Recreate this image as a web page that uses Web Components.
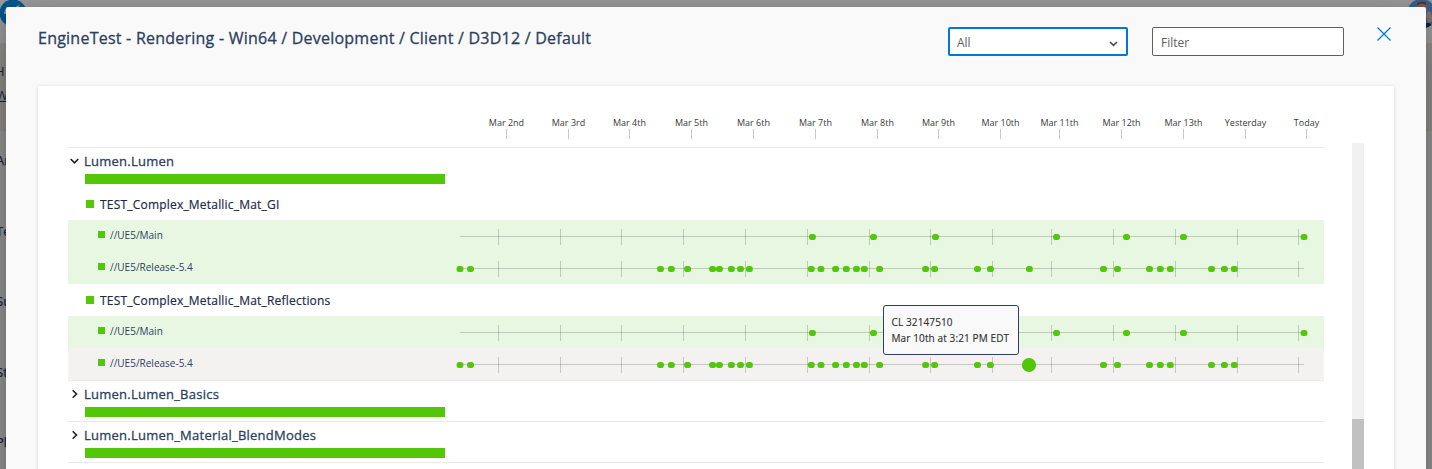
<!DOCTYPE html>
<html lang="en">
<head>
<meta charset="utf-8">
<title>Test automation</title>
<style>
html, body { margin: 0; height: 100%; overflow: hidden; background: #fff; font-family: "Open Sans", sans-serif; }
</style>
</head>
<body>
<automation-app></automation-app>
<script>
const define = (name, html, setup) => {
  const tpl = document.createElement('template');
  tpl.innerHTML = html;
  customElements.define(name, class extends HTMLElement {
    connectedCallback() {
      if (this.shadowRoot) return;
      this.attachShadow({ mode: 'open' }).append(tpl.content.cloneNode(true));
      if (setup) setup(this, this.shadowRoot);
    }
  });
};

/* Timeline data: x positions run from the left end of the track */
const DAYS = [
  ['Mar 2nd', 38], ['Mar 3rd', 100], ['Mar 4th', 161], ['Mar 5th', 223], ['Mar 6th', 285],
  ['Mar 7th', 347], ['Mar 8th', 409], ['Mar 9th', 470], ['Mar 10th', 532], ['Mar 11th', 591],
  ['Mar 12th', 653], ['Mar 13th', 715], ['Yesterday', 777], ['Today', 838]
];
const RUNS = {
  main: [352.4, 413.5, 475.5, 596.5, 666.5, 723.5, 844],
  release: [0, 10.5, 200.5, 211.3, 227.6, 252.6, 259.4, 271.4, 280.5, 289.4, 351.3, 361, 375.6, 386.3,
    396.5, 404.3, 419.6, 465.6, 474.6, 517.5, 530.4, 569.4, 643.5, 657.5, 689.5, 700.3, 710.3, 751.5, 764.4, 774.3]
};

/* Page behind the dialog */
define('app-backdrop', `
<style>
  :host { display: grid; grid-template-rows: 43px 88px 1fr; height: 469px; overflow: hidden; color: #2d3f5f; font-size: 13px; line-height: 18px; }
  header { display: flex; justify-content: space-between; background: #fff; }
  .logo { width: 30px; height: 30px; margin-left: -1px; }
  .avatar { width: 30px; height: 30px; margin-right: -2px; }
  .crumbs { background: #edebe9; padding-top: 19px; }
  .crumbs div { height: 24px; margin-left: -5px; }
  .crumbs .link { text-decoration: underline; margin-left: -4px; }
  nav { background: #faf9f8; padding-top: 20px; -webkit-text-stroke: .25px; }
  nav div { height: 70.6px; margin-left: -4px; }
</style>
<header>
  <svg class="logo" viewBox="0 0 30 30"><circle cx="14" cy="13" r="13.500" fill="#0090f0"/><path d="M5 14q0-5 4-7l-1 3 2-1-3 5zM17 6l4-1-2 3z" fill="#e8f4ff"/></svg>
  <svg class="avatar" viewBox="0 0 30 30"><circle cx="17.500" cy="13.500" r="14.500" fill="#5a9ff0"/><path d="M13 7q0-6 5-6 5 0 5 8l-2 8h-7z" fill="#d9927e"/><path d="M13 3.500q4-3.500 9-1v3q-2-2-4-2-3 0-5 2z" fill="#7b5850"/><path d="M22 15l2-4 3 1 2 9-5 2z" fill="#e0bdb2"/><path d="M20 23l5 0 3 2-6 3z" fill="#12386c"/></svg>
</header>
<div class="crumbs"><div>H</div><div class="link">W</div></div>
<nav><div>Ar</div><div>Te</div><div>Su</div><div>St</div><div>Pl</div></nav>`);

define('dialog-header', `
<style>
  :host { display: flex; align-items: flex-start; height: 79px; box-sizing: border-box; padding: 20px 34px 0 32px; }
  h1 { flex: 1; margin: 0; font-size: 16px; font-weight: 400; letter-spacing: .236px; -webkit-text-stroke: .3px; line-height: 22px; color: #2d3f5f; white-space: nowrap; }
</style>
<h1><slot></slot></h1><slot name="tools"></slot>`);

define('select-box', `
<style>
  :host { display: flex; align-items: center; justify-content: space-between; box-sizing: border-box; width: 180px; height: 29px; border: 2px solid #0078d4; border-radius: 2px; background: #fff; padding: 3px 8px 0 7px; font-size: 12px; line-height: 16px; color: #605e5c; margin-right: 24px; }
  svg { width: 10px; height: 8px; }
</style>
<span><slot></slot></span>
<svg viewBox="0 0 10 8"><path d="M2 3l3.500 3.300 3.500-3.300" fill="none" stroke="#4b4a49" stroke-width="1.600"/></svg>`);

define('filter-box', `
<style>
  :host { display: flex; align-items: center; box-sizing: border-box; width: 192px; height: 29px; border: 1px solid #605e5c; border-radius: 2px; background: #fff; padding: 3px 8px 0; font-size: 12px; line-height: 16px; color: #605e5c; margin-right: 32px; }
</style><slot></slot>`);

define('close-button', `
<style>
  :host { display: block; width: 16px; height: 16px; margin: -1px 0 0; }
  svg { display: block; }
</style>
<svg width="16" height="16" viewBox="0 0 16 16"><path d="M1.500 1.500l13 13M14.500 1.500l-13 13" stroke="#0078d4" stroke-width="1.150" fill="none"/></svg>`);

define('time-axis', `
<style>
  :host { display: block; margin-left: 400px; height: 61px; box-sizing: border-box; padding-top: 25px; }
  svg { display: block; overflow: visible; }
  text { font: 400 9px "Open Sans", sans-serif; fill: #3b3a39; text-anchor: middle; }
</style>
<svg width="856" height="30"></svg>`, (el, root) => {
  root.querySelector('svg').innerHTML = DAYS.map(([label, x]) =>
    `<text x="${x + .5}" y="15">${label}</text><rect x="${x}" y="18" width="1" height="10" fill="#c8c8c8"/>`).join('');
});

define('suite-group', `
<style>
  :host { display: block; border-top: 1px solid #eaeaea; }
  :host(:last-of-type) { border-bottom: 1px solid #eaeaea; }
  .head { display: flex; align-items: center; height: 26px; gap: 5px; padding-left: 1px; }
  .head svg { width: 10px; height: 10px; }
  h2 { margin: 0; font-size: 13px; line-height: 18px; font-weight: 400; letter-spacing: .24px; -webkit-text-stroke: .3px; color: #2d3f5f; }
  .bar { width: 360px; height: 10px; margin: 0 0 4px 17px; background: #52c708; }
</style>
<div class="head"><svg viewBox="0 0 10 10"><path fill="none" stroke="#201f1e" stroke-width="1.600"/></svg><h2></h2></div>
<div class="bar"></div>
<slot></slot>`, (el, root) => {
  root.querySelector('h2').textContent = el.getAttribute('label');
  root.querySelector('path').setAttribute('d', el.hasAttribute('open') ? 'M1.700 3L5.500 6.800 9.300 3' : 'M3.700 1.200L7.500 5 3.700 8.800');
});

define('test-case', `
<style>
  :host { display: block; }
  .name { display: flex; align-items: center; height: 32px; padding-left: 18px; gap: 6px; font-size: 12px; line-height: 16px; letter-spacing: .2px; -webkit-text-stroke: .18px; color: #1c2b45; }
  i { width: 8px; height: 8px; background: #52c708; }
  span { padding-top: 2px; }
</style>
<div class="name"><i></i><span></span></div><slot></slot>`, (el, root) => {
  root.querySelector('span').textContent = el.getAttribute('label');
});

define('stream-row', `
<style>
  :host { display: flex; align-items: center; height: 32px; background: #e8f7e1; font-size: 10px; line-height: 14px; color: #2d3f5f; position: relative; }
  :host([active]) { background: #f3f2f1; }
  i { width: 7px; height: 7px; margin: 0 5.500px 3px 29.500px; background: #52c708; }
  .label { width: 350px; margin-bottom: 3px; }
  svg { display: block; overflow: visible; }
</style>
<i></i><span class="label"><slot></slot></span><svg width="845" height="32"></svg><slot name="tip"></slot>`, (el, root) => {
  const big = Number(el.getAttribute('selected'));
  const c = 'rgba(40,40,40,.22)';
  root.querySelector('svg').innerHTML = `<rect y="16" width="844" height="1" fill="${c}"/>` +
    DAYS.map(([, x]) => `<rect x="${x}" y="9" width="1" height="16" fill="${c}"/>`).join('') +
    RUNS[el.getAttribute('runs')].map((x, i) => big && i === big
      ? `<circle cx="569" cy="17" r="7.100" fill="#52c708"/>`
      : `<rect x="${x - 3.4}" y="14" width="6.800" height="6" rx="2.500" fill="#52c708"/>`).join('');
});

define('run-tooltip', `
<style>
  :host { position: absolute; left: 814.500px; bottom: 25px; width: 136.500px; height: 50px; box-sizing: border-box; border: 1px solid #2d3f5f; border-radius: 3px; background: #f9f9f9; padding: 8px 0 0 8px; font-size: 10px; line-height: 16px; letter-spacing: .12px; -webkit-text-stroke: .15px; color: #323130; white-space: nowrap; z-index: 2; }
  ::slotted(*) { display: block; }
</style><slot></slot>`);

define('report-card', `
<style>
  :host { display: flex; box-sizing: border-box; height: 400px; margin: 0 32px; padding-left: 30px; background: #fff; box-shadow: 0 1px 4px rgba(0,0,0,.14); }
  .list { width: 1256px; }
  .scroll { width: 12px; height: 340px; margin: 57px 0 0 28px; background: #f1f1f1; padding-top: 276px; box-sizing: border-box; }
  .thumb { height: 64px; background: #c1c1c1; }
</style>
<div class="list"><slot></slot></div>
<div class="scroll"><div class="thumb"></div></div>`);

define('modal-dialog', `
<style>
  :host { display: block; position: absolute; top: 7px; left: 6px; width: 1420px; height: 500px; background: #f9f9f9; border-radius: 2px; box-shadow: 0 25.600px 57.600px rgba(0,0,0,.22), 0 4.800px 14.400px rgba(0,0,0,.18); }
</style><slot></slot>`);

define('automation-app', `
<style>
  :host { display: block; position: relative; height: 469px; overflow: hidden; }
  .dim { position: absolute; inset: 0; background: rgba(0,0,0,.4); }
</style>
<app-backdrop></app-backdrop>
<div class="dim"></div>
<modal-dialog>
  <dialog-header>EngineTest - Rendering - Win64 / Development / Client / D3D12 / Default
    <select-box slot="tools">All</select-box>
    <filter-box slot="tools">Filter</filter-box>
    <close-button slot="tools"></close-button>
  </dialog-header>
  <report-card>
    <time-axis></time-axis>
    <suite-group label="Lumen.Lumen" open>
      <test-case label="TEST_Complex_Metallic_Mat_GI">
        <stream-row runs="main">//UE5/Main</stream-row>
        <stream-row runs="release">//UE5/Release-5.4</stream-row>
      </test-case>
      <test-case label="TEST_Complex_Metallic_Mat_Reflections">
        <stream-row runs="main">//UE5/Main</stream-row>
        <stream-row runs="release" active selected="21">//UE5/Release-5.4
          <run-tooltip slot="tip"><span>CL 32147510</span><span>Mar 10th at 3:21 PM EDT</span></run-tooltip>
        </stream-row>
      </test-case>
    </suite-group>
    <suite-group label="Lumen.Lumen_Basics"></suite-group>
    <suite-group label="Lumen.Lumen_Material_BlendModes"></suite-group>
  </report-card>
</modal-dialog>`);
</script>
</body>
</html>
